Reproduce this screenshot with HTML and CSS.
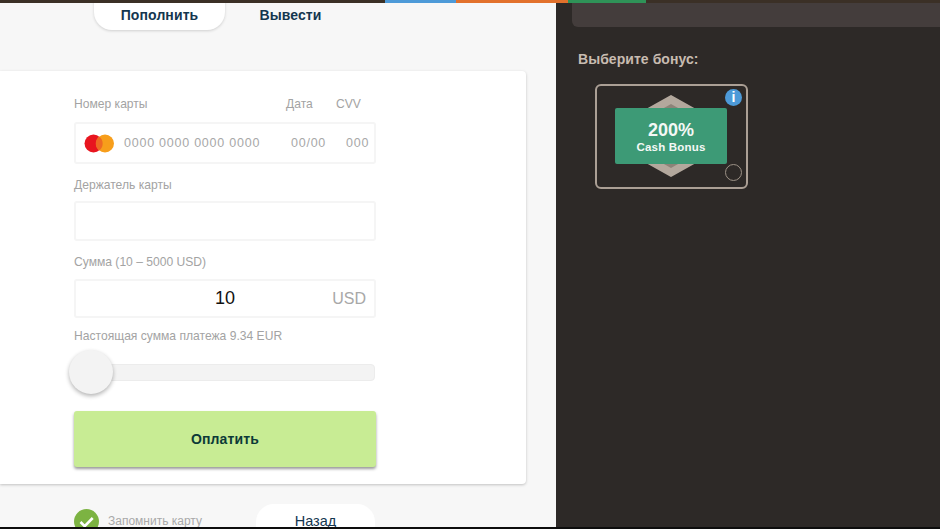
FILE: index.html
```html
<!DOCTYPE html>
<html lang="ru">
<head>
<meta charset="utf-8">
<title>Пополнить</title>
<link rel="stylesheet" href="styles.css">
</head>
<body>
<div class="page">
  <div class="topbar">
    <span class="seg seg-dark"></span>
    <span class="seg seg-blue"></span>
    <span class="seg seg-orange"></span>
    <span class="seg seg-green"></span>
  </div>
  <div class="main">
    <section class="left">
      <nav class="tabs">
        <span class="tab tab-active">Пополнить</span>
        <span class="tab">Вывести</span>
      </nav>
      <div class="card">
        <div class="labels-row">
          <span class="label label-number">Номер карты</span>
          <span class="label label-date">Дата</span>
          <span class="label">CVV</span>
        </div>
        <div class="field field-card">
          <svg class="mc" width="31" height="19" viewBox="0 0 31 19">
            <circle cx="9.5" cy="9.5" r="9" fill="#e8151f"/>
            <circle cx="21" cy="9.5" r="9" fill="#f79e1b"/>
            <path d="M15.2 2.4a9 9 0 0 1 0 14.2a9 9 0 0 1 0-14.2z" fill="#ee6a24"/>
          </svg>
          <span class="ph ph-number">0000 0000 0000 0000</span>
          <span class="ph ph-date">00/00</span>
          <span class="ph ph-cvv">000</span>
        </div>
        <div class="label label-holder">Держатель карты</div>
        <div class="field field-holder"></div>
        <div class="label label-sum">Сумма (10 – 5000 USD)</div>
        <div class="field field-sum">
          <span class="sum-value">10</span>
          <span class="sum-cur">USD</span>
        </div>
        <div class="label label-real">Настоящая сумма платежа 9.34 EUR</div>
        <div class="slider"><span class="knob"></span></div>
        <button class="pay" type="button">Оплатить</button>
      </div>
      <div class="footer">
        <div class="remember">
          <svg class="check" width="25" height="25" viewBox="0 0 25 25">
            <circle cx="12.5" cy="12.5" r="12.5" fill="#7cb342"/>
            <path d="M6.5 13l4.2 4.2l8-8.2" fill="none" stroke="#fff" stroke-width="2.6"/>
          </svg>
          <span class="remember-text">Запомнить карту</span>
        </div>
        <span class="back">Назад</span>
      </div>
    </section>
    <aside class="right">
      <div class="right-top"></div>
      <h2 class="bonus-title">Выберите бонус:</h2>
      <div class="bonus">
        <svg class="hex" width="92" height="82" viewBox="0 0 92 82">
          <path d="M46 1L92 27V55L46 81L0 55V27Z" fill="#b3a89d" stroke="#b3a89d" stroke-width="2" stroke-linejoin="round"/>
          <path d="M46 9L76 26H16Z" fill="#8d8378"/>
          <path d="M46 73L76 56H16Z" fill="#8d8378"/>
        </svg>
        <div class="bonus-plate">
          <div class="bonus-pct">200%</div>
          <div class="bonus-name">Cash Bonus</div>
        </div>
        <span class="info">i</span>
        <span class="radio"></span>
      </div>
    </aside>
  </div>
  <div class="bottom-line"></div>
</div>
</body>
</html>
```

FILE: styles.css
```css
* { box-sizing: border-box; }
html, body { margin: 0; height: 100%; overflow: hidden; }
body { font-family: "Liberation Sans", Arial, sans-serif; }

.page { width: 940px; height: 529px; display: flex; flex-direction: column; overflow: hidden; background: #2d2927; }

.topbar { height: 3px; flex: none; display: flex; background: #3b3026; }
.seg { display: block; height: 3px; }
.seg-dark { width: 385px; }
.seg-blue { width: 71px; background: #4d9ad8; }
.seg-orange { width: 112px; background: #e2712c; }
.seg-green { width: 78px; background: #2f9358; }

.main { flex: 1; min-height: 0; display: flex; overflow: hidden; }

.left { width: 556px; flex: none; background: #f7f7f7; overflow: hidden; }
.tabs { height: 71px; display: flex; padding-left: 94px; align-items: flex-start; margin-top: -3px; }
.tab { width: 131px; height: 30px; display: flex; align-items: center; justify-content: center; font-size: 14px; font-weight: 700; color: #14364f; letter-spacing: 0.1px; }
.tab-active { background: #fff; border-radius: 0 0 18px 18px; box-shadow: 0 1px 3px rgba(0,0,0,.16); }

.card { width: 526px; height: 413px; background: #fff; border-radius: 0 4px 4px 0; box-shadow: 0 1px 3px rgba(0,0,0,.22); padding: 25px 150px 0 74px; position: relative; }

.label { font-size: 12.1px; line-height: 16px; color: #a3a3a3; white-space: nowrap; }
.labels-row { display: flex; height: 16px; }
.label-number { width: 212px; }
.label-date { width: 50px; }

.field { width: 302px; border: 2px solid #f5f5f5; border-radius: 3px; background: #fff; }
.field-card { height: 42px; margin-top: 10px; display: flex; align-items: center; padding-left: 8px; }
.mc { flex: none; }
.ph { font-size: 12.5px; color: #a8a8a8; letter-spacing: .76px; white-space: nowrap; }
.ph-number { margin-left: 9px; width: 167px; }
.ph-date { width: 55px; }

.label-holder { margin-top: 13px; }
.field-holder { height: 40px; margin-top: 8px; }
.label-sum { margin-top: 13px; }
.field-sum { height: 39px; margin-top: 9px; display: flex; align-items: center; position: relative; justify-content: flex-end; padding-right: 8px; }
.sum-value { position: absolute; left: 139px; font-size: 18px; color: #111; }
.sum-cur { font-size: 16px; color: #a8a8a8; }
.label-real { margin-top: 10px; }

.slider { width: 301px; height: 17px; margin-top: 20px; background: #f3f3f3; border: 1px solid #ececec; border-radius: 4px; position: relative; }
.knob { position: absolute; left: -6px; top: -15px; width: 44px; height: 44px; border-radius: 50%; background: #f3f3f3; box-shadow: 0 2px 4px rgba(0,0,0,.3); }

.pay { display: block; width: 302px; height: 56px; margin-top: 30px; border: 0; border-radius: 3px; background: #c8ec94; box-shadow: 0 2px 3px rgba(0,0,0,.4); color: #0c3a38; font: 700 14px "Liberation Sans", Arial, sans-serif; letter-spacing: .15px; }

.footer { display: flex; justify-content: space-between; align-items: flex-start; width: 375px; padding: 20px 0 0 74px; }
.remember { display: flex; align-items: center; margin-top: 5px; }
.check { flex: none; }
.remember-text { margin-left: 9px; font-size: 12px; line-height: 14px; margin-top: -2px; color: #a9a9a9; }
.back { width: 119px; height: 34px; background: #fff; border-radius: 18px 18px 0 0; display: flex; align-items: center; justify-content: center; font-size: 14.5px; color: #14364f; }

.right { flex: 1; min-width: 0; background: #2d2927; }
.right-top { height: 24px; margin-left: 16px; background: #443d3c; border-radius: 0 0 0 6px; }
.bonus-title { margin: 24px 0 0 22px; font-size: 14px; line-height: 16px; font-weight: 700; color: #c8bcb1; letter-spacing: .05px; }
.bonus { position: relative; width: 153px; height: 105px; margin: 17px 0 0 39px; border: 2px solid #ab9f95; border-radius: 6px; }
.hex { position: absolute; left: 28px; top: 9px; }
.bonus-plate { position: absolute; left: 18px; top: 22px; width: 112px; height: 56px; border-radius: 2px; background: #3d9a76; color: #f4f8f5; text-align: center; padding-top: 12px; }
.bonus-pct { font-size: 18px; line-height: 21px; font-weight: 700; }
.bonus-name { font-size: 11.5px; line-height: 14px; font-weight: 700; letter-spacing: .2px; margin-top: -1px; }
.info { position: absolute; left: 128px; top: 3px; width: 17px; height: 17px; border-radius: 50%; background: #4d9ad8; color: #fff; font: 700 14px/17px "Liberation Sans", Arial, sans-serif; text-align: center; }
.radio { position: absolute; left: 128px; top: 78px; width: 17px; height: 17px; border-radius: 50%; border: 1.5px solid #9c9186; }

.bottom-line { height: 2px; flex: none; background: #0d0d0d; }
```
